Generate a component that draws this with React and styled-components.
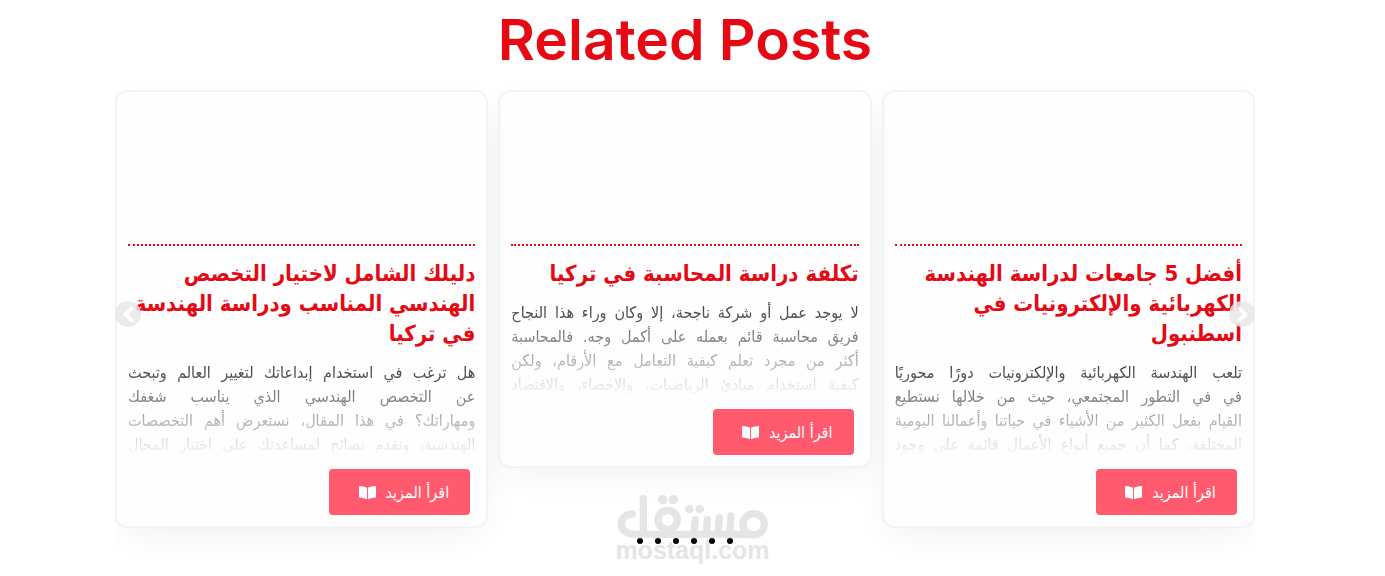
import React from 'react';
import styled, { createGlobalStyle } from 'styled-components'
import { FaBookOpen, FaChevronLeft, FaChevronRight } from 'react-icons/fa'

const GlobalStyle = createGlobalStyle`
  * {
    box-sizing: border-box;
  }
  body {
    margin: 0;
    background: #fff;
    font-family: "DejaVu Sans Condensed", "DejaVu Sans", sans-serif;
  }
`;

const Page = styled.main`
  position: relative;
  padding: 0 15px 32px 0;
`;

const Heading = styled.h2`
  margin: 0;
  padding-bottom: 10px;
  text-align: center;
  font-family: Inter, sans-serif;
  font-size: 57px;
  font-weight: 600;
  line-height: 80px;
  color: #e50914;
`;

const Carousel = styled.section`
  position: relative;
  width: 100%;
  max-width: 1140px;
  margin: 0 auto;
`;

const Track = styled.div`
  display: flex;
  align-items: flex-start;
  gap: 10px;
  overflow-x: clip;
`;

const Card = styled.article`
  flex: 1 1 0;
  min-width: 0;
  padding: 0 11px 11px;
  border: 2px solid #f3f3f3;
  border-radius: 12px;
  background: #fefefe;
  box-shadow: 0 10px 40px -10px rgba(0, 0, 0, 0.08);
`;

const Thumb = styled.div`
  height: 154px;
  border-bottom: 2px dotted #e50914;
`;

const Title = styled.h3`
  margin: 13px 0 12px;
  font-size: 22px;
  font-weight: 700;
  line-height: 30px;
  color: #e50914;
`;

const Line = styled.span`
  display: block;
  white-space: nowrap;
`;

const Excerpt = styled.p`
  margin: 0 0 12px;
  font-size: 16px;
  line-height: 24px;
  color: #333;
  text-align-last: justify;
  mask-image: linear-gradient(#000, transparent);
`;

const ReadMore = styled.a`
  display: flex;
  align-items: center;
  justify-content: center;
  gap: 10px;
  width: 141px;
  height: 46px;
  margin-right: 5px;
  padding-left: 8px;
  border-radius: 4px;
  background: #ff5a6e;
  color: #fff;
  font-size: 16px;
  text-decoration: none;
  white-space: nowrap;
`;

const Arrow = styled.button`
  position: absolute;
  top: 211px;
  ${props => props.$side}: 0;
  display: flex;
  align-items: center;
  justify-content: center;
  width: 26px;
  height: 26px;
  padding: 0;
  border: 0;
  border-radius: 50%;
  background: rgba(232, 232, 232, 0.85);
  color: #fff;
  font-size: 17px;

  svg {
    stroke: currentColor;
    stroke-width: 40;
  }
`;

const Dots = styled.div`
  display: flex;
  justify-content: center;
  gap: 12px;
  position: relative;
  z-index: 1;
  padding-top: 10px;
`;

const Dot = styled.button`
  width: 6px;
  height: 6px;
  padding: 0;
  border: 0;
  border-radius: 50%;
  background: #000;
`;

const Watermark = styled.div`
  position: absolute;
  left: 0;
  right: 0;
  bottom: 16px;
  display: flex;
  flex-direction: column;
  align-items: center;
  color: #e5e5e5;
  font-family: "Liberation Sans", Arial, sans-serif;
  font-size: 25px;
  font-weight: 700;
  line-height: 20px;
  pointer-events: none;
`;

const posts = [
  {
    title: ['أفضل 5 جامعات لدراسة الهندسة', 'الكهربائية والإلكترونيات في', 'اسطنبول'],
    text: [
      'تلعب الهندسة الكهربائية والإلكترونيات دورًا محوريًا',
      'في في التطور المجتمعي، حيث من خلالها نستطيع',
      'القيام بفعل الكثير من الأشياء في حياتنا وأعمالنا اليومية',
      'المختلفة، كما أن جميع أنواع الأعمال قائمة على وجود',
    ],
  },
  {
    title: ['تكلفة دراسة المحاسبة في تركيا'],
    text: [
      'لا يوجد عمل أو شركة ناجحة، إلا وكان وراء هذا النجاح',
      'فريق محاسبة قائم بعمله على أكمل وجه. فالمحاسبة',
      'أكثر من مجرد تعلم كيفية التعامل مع الأرقام، ولكن',
      'كيفية استخدام مبادئ الرياضيات، والإحصاء، والاقتصاد',
    ],
  },
  {
    title: ['دليلك الشامل لاختيار التخصص', 'الهندسي المناسب ودراسة الهندسة', 'في تركيا'],
    text: [
      'هل ترغب في استخدام إبداعاتك لتغيير العالم وتبحث',
      'عن التخصص الهندسي الذي يناسب شغفك',
      'ومهاراتك؟ في هذا المقال، نستعرض أهم التخصصات',
      'الهندسية، ونقدم نصائح لمساعدتك على اختيار المجال',
    ],
  },
];

const Post = ({ title, text }) => (
  <Card>
    <Thumb />
    <Title>
      {title.map(line => <Line key={line}>{line} </Line>)}
    </Title>
    <Excerpt>
      {text.map(line => <Line key={line}>{line} </Line>)}
    </Excerpt>
    <ReadMore href="#">
      اقرأ المزيد
      <FaBookOpen size={17} />
    </ReadMore>
  </Card>
)

const MostaqlLogo = () => (
  <svg width="152" height="46" viewBox="48 42 456 138" fill="none" stroke="currentColor" strokeWidth="22" strokeLinecap="round">
    <circle cx="458" cy="133" r="32" />
    <path d="M458 163H105C78 163 61 151 61 131C61 114 76 102 94 102" />
    <path d="M127 55V161" />
    <circle cx="200" cy="120" r="29" />
    <path d="M283 119L279 160M319 119L316 160M355 113L351 160M390 108L386 160" />
    <g fill="currentColor" stroke="none">
      <circle cx="185" cy="59" r="14" />
      <circle cx="217" cy="59" r="14" />
      <circle cx="265" cy="87" r="13" />
      <circle cx="296" cy="87" r="13" />
    </g>
  </svg>
)

const App = () => {
  return (
    <Page>
      <GlobalStyle />
      <Heading>Related Posts</Heading>
      <Carousel>
        <Track dir="rtl" lang="ar">
          {posts.map(post => <Post key={post.title[0]} {...post} />)}
        </Track>
        <Arrow type="button" $side="left" aria-label="Previous"><FaChevronLeft /></Arrow>
        <Arrow type="button" $side="right" aria-label="Next"><FaChevronRight /></Arrow>
        <Dots>
          {[1, 2, 3, 4, 5, 6].map(n => <Dot key={n} type="button" aria-label={`Slide ${n}`} />)}
        </Dots>
      </Carousel>
      <Watermark>
        <MostaqlLogo />
        mostaql.com
      </Watermark>
    </Page>
  )
}

export default App;
